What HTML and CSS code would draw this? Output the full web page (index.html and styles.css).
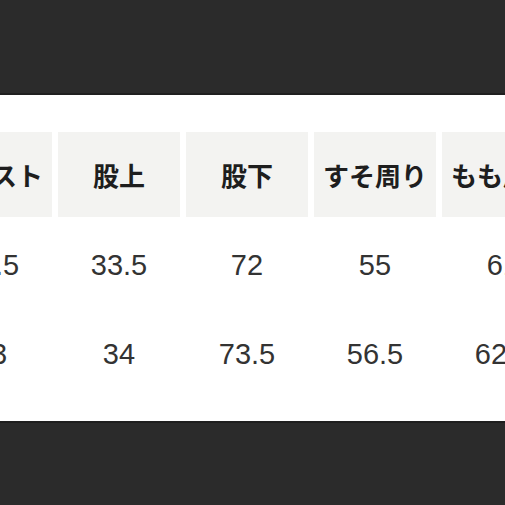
FILE: index.html
```html
<!DOCTYPE html>
<html lang="ja">
<head>
<meta charset="utf-8">
<link rel="stylesheet" href="styles.css">
</head>
<body>
<div class="band top"></div>
<div class="sheet">
  <div class="row head">
    <div class="cell">ウエスト</div>
    <div class="cell">股上</div>
    <div class="cell">股下</div>
    <div class="cell">すそ周り</div>
    <div class="cell">もも周り</div>
  </div>
  <div class="row data">
    <div class="cell">41.5</div>
    <div class="cell">33.5</div>
    <div class="cell">72</div>
    <div class="cell">55</div>
    <div class="cell">61</div>
  </div>
  <div class="row data">
    <div class="cell">43</div>
    <div class="cell">34</div>
    <div class="cell">73.5</div>
    <div class="cell">56.5</div>
    <div class="cell">62.5</div>
  </div>
</div>
<div class="band bottom"></div>
</body>
</html>
```

FILE: styles.css
```css
html, body {
  margin: 0;
  padding: 0;
  background: #2b2b2b;
}
body {
  width: 505px;
  height: 505px;
  overflow: hidden;
  display: flex;
  flex-direction: column;
}
.band.top {
  height: 93px;
  border-bottom: 2px solid #1f1f1f;
  background: #2b2b2b;
}
.band.bottom {
  flex: 1;
  border-top: 2px solid #1f1f1f;
  background: #2b2b2b;
}
.sheet {
  height: 326px;
  background: #ffffff;
  overflow: hidden;
  padding-top: 37px;
  box-sizing: border-box;
}
.row {
  display: flex;
  gap: 6px;
  margin-left: -70px;
}
.cell {
  flex: 0 0 122px;
  display: flex;
  align-items: center;
  justify-content: center;
  white-space: nowrap;
}
.head .cell {
  height: 85px;
  background: #f3f3f1;
  font-family: "Noto Sans CJK JP", sans-serif;
  font-weight: 700;
  font-size: 26px;
  color: #1e1e1e;
}
.head {
  margin-bottom: 4px;
}
.data .cell {
  height: 89px;
  font-family: "Liberation Sans", Arial, sans-serif;
  font-size: 29px;
  color: #333333;
}
```
